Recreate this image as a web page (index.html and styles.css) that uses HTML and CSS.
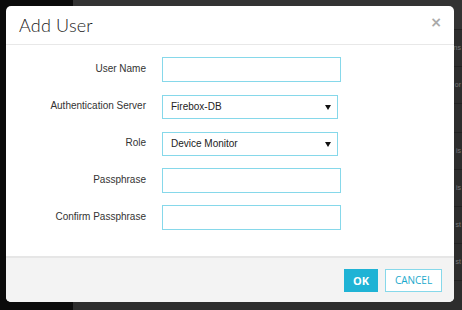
FILE: index.html
```html
<!DOCTYPE html>
<html>
<head>
<meta charset="utf-8">
<link rel="stylesheet" href="styles.css">
</head>
<body>
<div class="backdrop">
  <div class="sidebar"></div>
  <div class="main">
    <div class="toolbar"></div>
    <div class="row">ns</div>
    <div class="row">or</div>
    <div class="row"></div>
    <div class="row">is</div>
    <div class="row">is</div>
    <div class="row">st</div>
    <div class="row">st</div>
    <div class="row"></div>
  </div>
</div>
<div class="modal">
  <div class="modal-header">
    <h1 class="modal-title">Add User</h1>
    <span class="close">×</span>
  </div>
  <div class="modal-body">
    <div class="form-row">
      <label class="label">User Name</label>
      <div class="field"></div>
    </div>
    <div class="form-row">
      <label class="label">Authentication Server</label>
      <div class="field select"><span>Firebox-DB</span><span class="caret"></span></div>
    </div>
    <div class="form-row">
      <label class="label">Role</label>
      <div class="field select"><span>Device Monitor</span><span class="caret"></span></div>
    </div>
    <div class="form-row">
      <label class="label">Passphrase</label>
      <div class="field"></div>
    </div>
    <div class="form-row">
      <label class="label">Confirm Passphrase</label>
      <div class="field"></div>
    </div>
  </div>
  <div class="modal-footer">
    <button class="btn btn-ok">OK</button>
    <button class="btn btn-cancel">CANCEL</button>
  </div>
</div>
</body>
</html>
```
FILE: styles.css
```css
html, body {
  margin: 0;
  padding: 0;
  width: 462px;
  height: 310px;
  overflow: hidden;
  font-family: "Liberation Sans", Arial, sans-serif;
}
.backdrop {
  display: flex;
  width: 462px;
  height: 310px;
}
.sidebar {
  width: 73px;
  background: #0b0b0b;
}
.main {
  flex: 1;
  background: #2d2d2d;
  display: flex;
  flex-direction: column;
}
.toolbar {
  height: 36px;
  background: #333;
}
.row {
  height: 36px;
  border-top: 1px solid #222;
  color: #777;
  font-size: 7px;
  line-height: 36px;
  text-align: right;
  padding-right: 1px;
  white-space: nowrap;
}
.modal {
  position: absolute;
  left: 6px;
  top: 6px;
  width: 448px;
  height: 296px;
  background: #fff;
  border-radius: 5px;
  display: flex;
  flex-direction: column;
  overflow: hidden;
}
.modal-header {
  height: 38px;
  border-bottom: 1px solid #e8e8e8;
  display: flex;
  align-items: center;
  justify-content: space-between;
  padding: 0 12px 0 13px;
}
.modal-title {
  margin: 0;
  font-family: Lato, "Open Sans", sans-serif;
  font-weight: 300;
  font-size: 18px;
  color: #1a1a1a;
  letter-spacing: 0.2px;
}
.close {
  font-family: "DejaVu Sans", sans-serif;
  font-weight: bold;
  font-size: 14px;
  color: #aaa;
  margin-top: -6px;
}
.modal-body {
  flex: 1;
  padding-top: 12px;
  display: flex;
  flex-direction: column;
  gap: 12px;
}
.form-row {
  display: flex;
  align-items: center;
  height: 25px;
}
.label {
  width: 140px;
  text-align: right;
  font-size: 10px;
  color: #333;
  margin-right: 16px;
  margin-top: -3px;
}
.field {
  width: 177px;
  height: 23px;
  border: 1px solid #86d8ea;
  box-sizing: content-box;
}
.select {
  width: 174px;
  height: 22px;
  display: flex;
  align-items: center;
  justify-content: space-between;
  font-size: 10px;
  color: #222;
  padding: 0;
}
.select span:first-child {
  padding-left: 8px;
}
.caret {
  width: 0;
  height: 0;
  border-left: 3px solid transparent;
  border-right: 3px solid transparent;
  border-top: 5px solid #111;
  margin-right: 6px;
  margin-top: 2px;
}
.modal-footer {
  height: 46px;
  border-top: 2px solid #e6e6e6;
  background: #f3f3f3;
  display: flex;
  align-items: center;
  justify-content: flex-end;
  gap: 7px;
  padding-right: 12px;
  box-sizing: border-box;
}
.btn {
  height: 23px;
  font-family: "Open Sans", sans-serif;
  font-size: 10px;
  border-radius: 0;
  padding: 0;
}
.btn-ok {
  width: 34px;
  background: #1fb3d5;
  border: none;
  color: #fff;
  font-weight: 700;
  font-size: 11px;
}
.btn-cancel {
  width: 57px;
  background: #fff;
  border: 1px solid #86d8ea;
  color: #1aa9cc;
  font-weight: 400;
}
```
